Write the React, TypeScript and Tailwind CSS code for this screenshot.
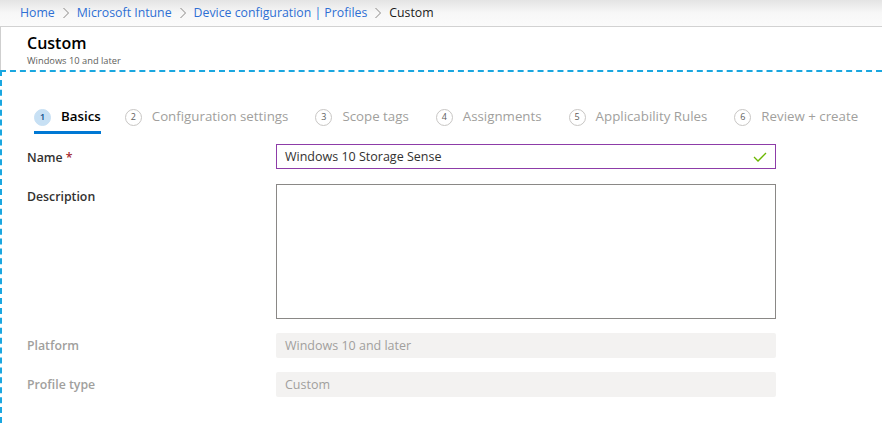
import React from "react";

const steps = [
  { n: 1, label: "Basics", active: true },
  { n: 2, label: "Configuration settings" },
  { n: 3, label: "Scope tags" },
  { n: 4, label: "Assignments" },
  { n: 5, label: "Applicability Rules" },
  { n: 6, label: "Review + create" },
];

function Chevron() {
  return (
    <svg width="8" height="12" viewBox="0 0 8 12" className="mx-[7px]">
      <path d="M1.5 1 L6.5 6 L1.5 11" fill="none" stroke="#8a8886" strokeWidth="1" />
    </svg>
  );
}

export default function App() {
  return (
    <div
      className="flex h-[423px] w-[882px] flex-col overflow-hidden bg-white text-[#323130]"
      style={{ fontFamily: '"Open Sans", "Noto Sans", sans-serif' }}
    >
      {/* breadcrumb */}
      <div className="flex h-[27px] shrink-0 items-center border-b border-[#d2d2d2] bg-gradient-to-b from-[#e4e4e4] via-[#f7f7f7] to-[#fbfbfb] pl-[20px] text-[12.3px]">
        <span className="text-[#2e6fd4]">Home</span>
        <Chevron />
        <span className="text-[#2e6fd4]">Microsoft Intune</span>
        <Chevron />
        <span className="text-[#2e6fd4]">Device configuration | Profiles</span>
        <Chevron />
        <span className="text-[#1b1b1b]">Custom</span>
      </div>

      {/* title */}
      <div className="h-[43px] shrink-0 border-l border-[#cfcfcf] pl-[26px] pt-[5px]">
        <div className="text-[16px] font-semibold leading-[22px] text-black">Custom</div>
        <div className="mt-[1px] text-[9.3px] leading-[12px] text-[#605e5c]">Windows 10 and later</div>
      </div>

      {/* content */}
      <div className="flex-1 overflow-hidden border-l-2 border-t-2 border-dashed border-[#1aa7e0] pl-[25px]">
        <div className="ml-[7px] mt-[31px] flex items-center whitespace-nowrap text-[13.3px]">
          {steps.map((s) => (
            <div
              key={s.n}
              className={`relative flex h-[28px] shrink-0 items-center ${s.active ? "mr-[24px]" : "mr-[27px]"}`}
            >
              <span
                className={
                  s.active
                    ? "mr-[10px] flex h-[17px] w-[17px] items-center justify-center rounded-full border border-[#c7e0f4] bg-[#c7e0f4] text-[9px] font-semibold text-[#0b4a8a]"
                    : "mr-[10px] flex h-[17px] w-[17px] items-center justify-center rounded-full border border-[#c8c6c4] text-[9px] text-[#605e5c]"
                }
              >
                {s.n}
              </span>
              <span className={s.active ? "font-semibold text-black" : "text-[#a19f9d]"}>{s.label}</span>
              {s.active && <div className="absolute bottom-[-3px] left-0 right-0 h-[3px] bg-[#0078d4]" />}
            </div>
          ))}
        </div>

        <div className="mt-[13px] flex flex-col text-[12.5px]">
          <div className="flex items-center">
            <div className="w-[249px] pt-[3px] text-[12.3px] font-semibold">
              Name <span className="text-[#a4262c]">*</span>
            </div>
            <div className="flex h-[25px] w-[500px] items-center justify-between border border-[#8d3ca8] pl-[8px] pr-[8px] pt-[1px]">
              <span className="text-[#323130]">Windows 10 Storage Sense</span>
              <svg width="14" height="10" viewBox="0 0 14 10">
                <path d="M1 5 L5 9 L13 1" fill="none" stroke="#6bb700" strokeWidth="1.3" />
              </svg>
            </div>
          </div>

          <div className="mt-[15px] flex items-start">
            <div className="w-[249px] pt-[4px] text-[12.3px] font-semibold">Description</div>
            <div className="h-[135px] w-[500px] border border-[#8a8886]" />
          </div>

          <div className="mt-[14px] flex items-center">
            <div className="w-[249px] pt-[2px] text-[12.3px] font-semibold text-[#a19f9d]">Platform</div>
            <div className="flex h-[25px] w-[500px] items-center rounded-[2px] bg-[#f3f2f1] pl-[9px] pt-[1px] text-[#a19f9d]">
              Windows 10 and later
            </div>
          </div>

          <div className="mt-[14px] flex items-center">
            <div className="w-[249px] pt-[2px] text-[12.3px] font-semibold text-[#a19f9d]">Profile type</div>
            <div className="flex h-[25px] w-[500px] items-center rounded-[2px] bg-[#f3f2f1] pl-[9px] pt-[1px] text-[#a19f9d]">
              Custom
            </div>
          </div>
        </div>
      </div>
    </div>
  );
}
